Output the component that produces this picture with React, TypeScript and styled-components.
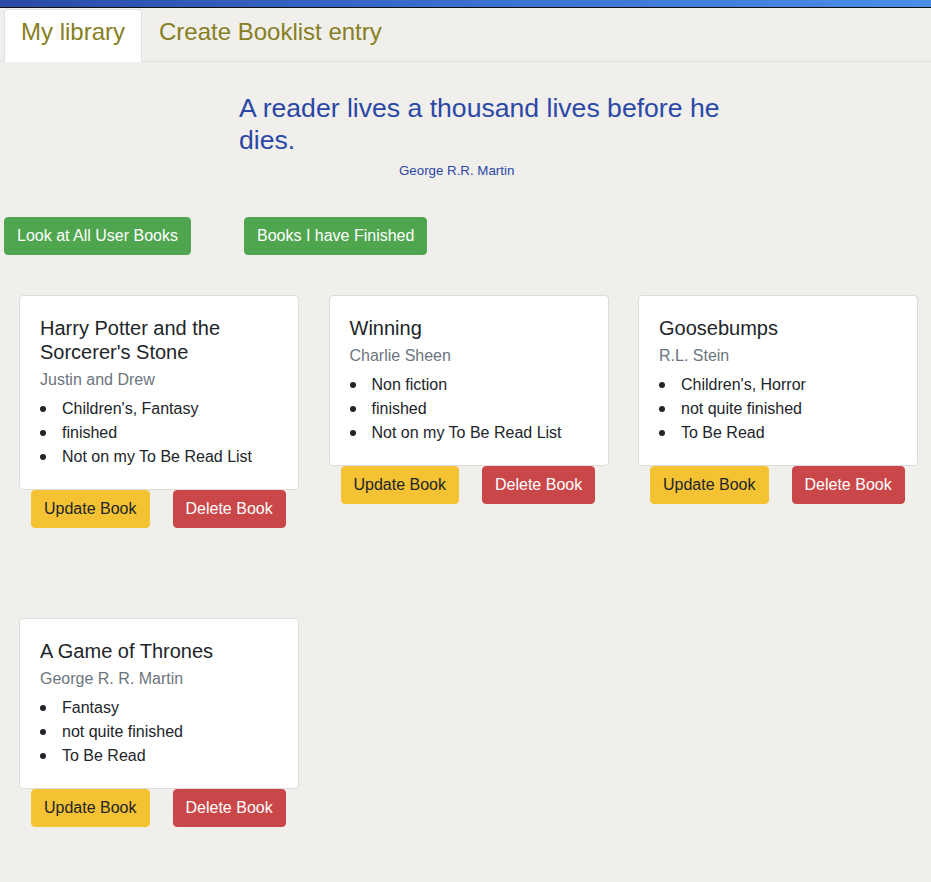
import React from "react";
import styled, { createGlobalStyle } from "styled-components";

const GlobalStyle = createGlobalStyle`
  html, body {
    margin: 0;
    padding: 0;
    background: #f0efec;
    font-family: "Liberation Sans", Arial, sans-serif;
    color: #212529;
  }
  * { box-sizing: border-box; }
`;

const Page = styled.div`
  width: 931px;
  min-height: 882px;
  background: #f0efec;
`;

const TopBar = styled.div`
  height: 8px;
  background: linear-gradient(90deg, #2a4aa6 0%, #3a6fd0 50%, #4a8ee6 100%);
  border-bottom: 1px solid #111;
`;

const Tabs = styled.ul`
  display: flex;
  list-style: none;
  margin: 0;
  padding: 1px 0 0 4px;
  border-bottom: 1px solid #dee2e6;
`;

const Tab = styled.li<{ $active?: boolean }>`
  margin-bottom: -1px;
  padding: 4px 16px 11px;
  font-size: 24px;
  line-height: 36px;
  color: #86801f;
  border: 1px solid ${(p) => (p.$active ? "#dee2e6" : "transparent")};
  border-bottom-color: ${(p) => (p.$active ? "#fff" : "transparent")};
  border-radius: 4px 4px 0 0;
  background: ${(p) => (p.$active ? "#fff" : "transparent")};
`;

const Quote = styled.blockquote`
  margin: 30px 0 0 239px;
  width: 510px;
  color: #2b48a6;
`;

const QuoteText = styled.p`
  margin: 0;
  font-size: 26.6px;
  line-height: 32px;
`;

const QuoteFooter = styled.footer`
  margin: 5px 0 0 160px;
  font-size: 13.3px;
  line-height: 1.5;
`;

const ActionRow = styled.div`
  display: flex;
  gap: 53px;
  padding-left: 4px;
  margin-top: 36px;
`;

const Button = styled.button<{ $variant: "green" | "yellow" | "red" }>`
  font-family: "Liberation Sans", Arial, sans-serif;
  font-size: 16px;
  line-height: 24px;
  padding: 6px 12px;
  border-radius: 4px;
  border: 1px solid
    ${(p) => (p.$variant === "green" ? "#4fa64f" : p.$variant === "yellow" ? "#f4c232" : "#ca4749")};
  background: ${(p) => (p.$variant === "green" ? "#4fa64f" : p.$variant === "yellow" ? "#f4c232" : "#ca4749")};
  color: ${(p) => (p.$variant === "yellow" ? "#212529" : "#fff")};
  cursor: pointer;
`;

const Grid = styled.div`
  display: grid;
  grid-template-columns: repeat(3, 280px);
  column-gap: 29.5px;
  row-gap: 90px;
  align-items: start;
  padding-left: 19px;
  margin-top: 40px;
`;

const Item = styled.div`
  display: flex;
  flex-direction: column;
`;

const Card = styled.div`
  background: #fff;
  border: 1px solid #dcdcdc;
  border-radius: 4px;
  padding: 20px;
`;

const Title = styled.h5`
  margin: 0 0 12px;
  font-size: 20px;
  font-weight: 400;
  line-height: 1.2;
  color: #212529;
`;

const Subtitle = styled.h6`
  margin: -6px 0 8px;
  font-size: 16px;
  font-weight: 400;
  line-height: 1.2;
  color: #6c757d;
`;

const List = styled.ul`
  margin: 0;
  padding: 0;
  list-style: none;
  font-size: 16px;
  line-height: 24px;
  color: #212529;
`;

const ListItem = styled.li`
  display: flex;
  align-items: center;

  &::before {
    content: "";
    flex-shrink: 0;
    width: 6px;
    height: 6px;
    border-radius: 50%;
    background: #212529;
    margin-right: 16px;
  }
`;

const CardButtons = styled.div`
  display: flex;
  gap: 23px;
  padding-left: 12px;
`;

const books = [
  {
    title: "Harry Potter and the Sorcerer's Stone",
    author: "Justin and Drew",
    items: ["Children's, Fantasy", "finished", "Not on my To Be Read List"],
  },
  {
    title: "Winning",
    author: "Charlie Sheen",
    items: ["Non fiction", "finished", "Not on my To Be Read List"],
  },
  {
    title: "Goosebumps",
    author: "R.L. Stein",
    items: ["Children's, Horror", "not quite finished", "To Be Read"],
  },
  {
    title: "A Game of Thrones",
    author: "George R. R. Martin",
    items: ["Fantasy", "not quite finished", "To Be Read"],
  },
];

export default function App() {
  return (
    <Page>
      <GlobalStyle />
      <TopBar />
      <Tabs>
        <Tab $active>My library</Tab>
        <Tab>Create Booklist entry</Tab>
      </Tabs>
      <Quote>
        <QuoteText>A reader lives a thousand lives before he dies.</QuoteText>
        <QuoteFooter>George R.R. Martin</QuoteFooter>
      </Quote>
      <ActionRow>
        <Button $variant="green">Look at All User Books</Button>
        <Button $variant="green">Books I have Finished</Button>
      </ActionRow>
      <Grid>
        {books.map((b) => (
          <Item key={b.title}>
            <Card>
              <Title>{b.title}</Title>
              <Subtitle>{b.author}</Subtitle>
              <List>
                {b.items.map((i) => (
                  <ListItem key={i}>{i}</ListItem>
                ))}
              </List>
            </Card>
            <CardButtons>
              <Button $variant="yellow">Update Book</Button>
              <Button $variant="red">Delete Book</Button>
            </CardButtons>
          </Item>
        ))}
      </Grid>
    </Page>
  );
}
